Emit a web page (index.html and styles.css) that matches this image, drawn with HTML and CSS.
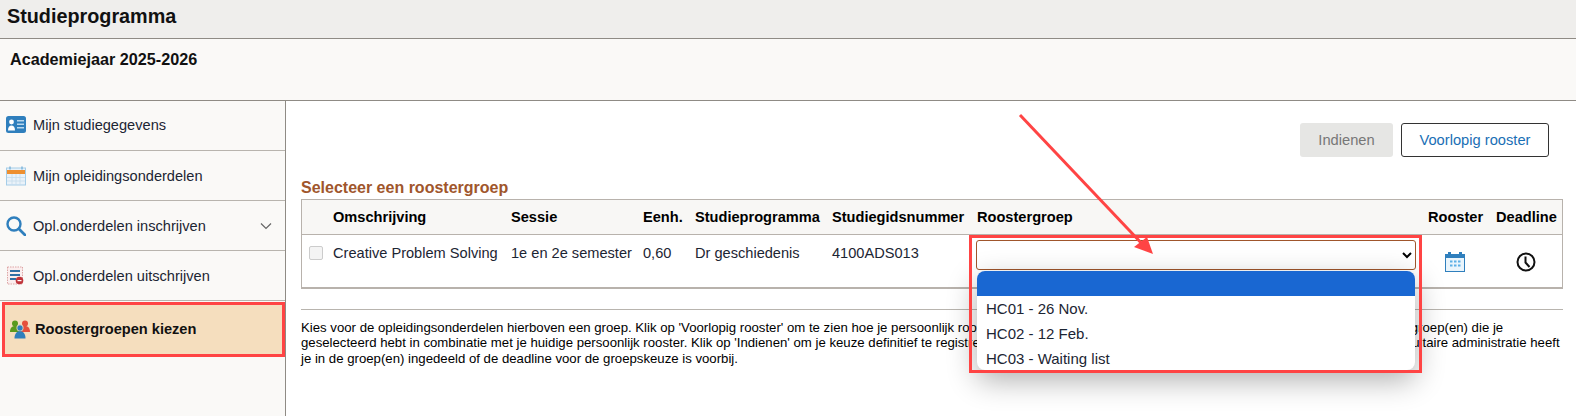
FILE: index.html
```html
<!DOCTYPE html>
<html lang="nl">
<head>
  <meta charset="UTF-8" />
  <meta name="viewport" content="width=device-width, initial-scale=1.0" />
  <title>Studieprogramma</title>
  <link rel="stylesheet" href="styles.css">
</head>
<body>
  <header class="page-title">Studieprogramma</header>
  <div class="year-bar">Academiejaar 2025-2026</div>

  <div class="layout">
    <nav class="sidebar">
      <a class="nav-item">
        <svg class="nav-icon" viewBox="0 0 20 20">
          <rect x="0" y="1" width="20" height="17" rx="2.5" fill="#2f7fbd"/>
          <circle cx="5.5" cy="7" r="2.4" fill="#fff"/>
          <path d="M2 15.5c0-3.5 1.500-5 3.500-5s3.500 1.500 3.500 5z" fill="#fff"/>
          <path d="M11 5h7v1.500h-7zM11 8.500h7v1.500h-7zM11 12h7v1.500h-7z" fill="#b9d8ee"/>
        </svg>
        Mijn studiegegevens
      </a>
      <a class="nav-item">
        <svg class="nav-icon" viewBox="0 0 20 20">
          <rect x="0.500" y="2" width="19" height="17" fill="#e9f2f9" stroke="#a5cde8"/>
          <rect x="1" y="4" width="18" height="4" fill="#ee8f2f"/>
          <path d="M4 .5v3M16 .5v3" stroke="#7fb6dc" stroke-width="1.500"/>
          <path d="M1 11.500h18M1 15h18M6 8v10.500M10 8v10.500M14 8v10.500" stroke="#c5dcec" stroke-width=".8"/>
        </svg>
        Mijn opleidingsonderdelen
      </a>
      <a class="nav-item">
        <svg class="nav-icon" viewBox="0 0 20 20">
          <circle cx="8" cy="8" r="6.500" fill="none" stroke="#2f7fbd" stroke-width="2.400"/>
          <path d="M13 13l6 6" stroke="#2f7fbd" stroke-width="2.800" stroke-linecap="round"/>
        </svg>
        Opl.onderdelen inschrijven
        <svg class="nav-chevron" viewBox="0 0 12 8">
          <path d="M1 1.500l5 5 5-5" fill="none" stroke="#666" stroke-width="1.200"/>
        </svg>
      </a>
      <a class="nav-item">
        <svg class="nav-icon" viewBox="0 0 20 20">
          <rect x="1.500" y="1" width="15" height="17" fill="#fbeeee" stroke="#dda5a5" stroke-dasharray="1.500 1"/>
          <path d="M4 4h10v2h-10zM4 8h10v2h-10zM4 12h6v2h-6z" fill="#2f6fa5"/>
          <circle cx="13.500" cy="14.500" r="3.800" fill="#c0343a"/>
          <path d="M11.500 14h4v1.200h-4z" fill="#fff"/>
        </svg>
        Opl.onderdelen uitschrijven
      </a>
      <a class="nav-item nav-item-active">
        <svg class="nav-icon" viewBox="0 0 20 20">
          <circle cx="5" cy="4.500" r="3" fill="#5a9a1e"/>
          <path d="M0 13c0-4 2-6 5-6s5 2 5 6z" fill="#5a9a1e"/>
          <circle cx="15" cy="4.500" r="3" fill="#e5503c"/>
          <path d="M10 13c0-4 2-6 5-6s5 2 5 6z" fill="#e5503c"/>
          <circle cx="10" cy="9" r="3.200" fill="#2f7fbd" stroke="#f5deBE" stroke-width=".8"/>
          <path d="M4.500 19.500c0-4.500 2-7.200 5.500-7.200s5.500 2.700 5.500 7.200z" fill="#2f7fbd"/>
        </svg>
        Roostergroepen kiezen
      </a>
    </nav>

    <main class="content">
      <div class="actions">
        <button class="btn btn-disabled">Indienen</button>
        <button class="btn btn-outline">Voorlopig rooster</button>
      </div>

      <h2 class="section-title">Selecteer een roostergroep</h2>

      <table class="group-table">
        <thead>
          <tr>
            <th class="col-check"></th>
            <th class="col-desc">Omschrijving</th>
            <th class="col-session">Sessie</th>
            <th class="col-units">Eenh.</th>
            <th class="col-program">Studieprogramma</th>
            <th class="col-number">Studiegidsnummer</th>
            <th class="col-group">Roostergroep</th>
            <th class="col-schedule">Rooster</th>
            <th class="col-deadline">Deadline</th>
          </tr>
        </thead>
        <tbody>
          <tr>
            <td class="check-cell"><span class="fake-check"></span></td>
            <td>Creative Problem Solving</td>
            <td>1e en 2e semester</td>
            <td>0,60</td>
            <td>Dr geschiedenis</td>
            <td>4100ADS013</td>
            <td class="group-cell">
              <select class="group-select"><option></option></select>
              <ul class="group-options">
                <li class="option-selected">&nbsp;</li>
                <li>HC01 - 26 Nov.</li>
                <li>HC02 - 12 Feb.</li>
                <li>HC03 - Waiting list</li>
              </ul>
              <div class="mark-box"></div>
            </td>
            <td class="icon-cell">
              <svg class="table-icon icon-schedule" viewBox="0 0 20 20">
                <rect x="0" y="2" width="20" height="18" fill="#2f7fbd"/>
                <rect x="1" y="6" width="18" height="13" fill="#eaf5fc"/>
                <path d="M3 0h3v4h-3zM14 0h3v4h-3z" fill="#2f7fbd"/>
                <path d="M5 8.500h2.500v2h-2.500zM9 8.500h2.500v2h-2.500zM13 8.500h2.500v2h-2.500zM5 12.500h2.500v2h-2.500zM9 12.500h2.500v2h-2.500zM13 12.500h2.500v2h-2.500z" fill="#5cb0e6"/>
              </svg>
            </td>
            <td class="icon-cell">
              <svg class="table-icon icon-deadline" viewBox="0 0 20 20">
                <circle cx="10" cy="10" r="8.500" fill="none" stroke="#111" stroke-width="2"/>
                <path d="M9.500 4.500v6l4 4.500" fill="none" stroke="#111" stroke-width="2"/>
              </svg>
            </td>
          </tr>
        </tbody>
      </table>

      <hr class="divider">

      <p class="help-text">
        Kies voor de opleidingsonderdelen hierboven een groep. Klik op 'Voorlopig rooster' om te zien hoe je persoonlijk rooster eruit zou zien als je de keuze bevestigt met wijzigingen van de roostergroep(en) die je<br>
        geselecteerd hebt in combinatie met je huidige persoonlijk rooster. Klik op 'Indienen' om je keuze definitief te registreren. Je keuze is pas definitief en wordt verwerkt en bevestigd zodra de facultaire administratie heeft<br>
        je in de groep(en) ingedeeld of de deadline voor de groepskeuze is voorbij.
      </p>
    </main>
  </div>

  <svg class="mark-arrow" viewBox="0 0 1576 416">
    <path d="M1020 115L1146 248" stroke="#ff4444" stroke-width="3"/>
    <path d="M1153 254L1134 247L1147 237z" fill="#ff4444"/>
  </svg>
</body>
</html>
```

FILE: styles.css
```css
body {
  margin: 0;
  height: 416px;
  overflow: hidden;
  position: relative;
  background-color: #fff;
  font-family: "Liberation Sans", Arial, sans-serif;
  font-size: 14.6px;
  color: #111;
}

.page-title {
  box-sizing: border-box;
  padding: 5px 7px 0;
  background-color: #efeeec;
  border-bottom: 1px solid #8f8b85;
  height: 39px;
  font-size: 19.8px;
  font-weight: bold;
  line-height: 22px;
}
.year-bar {
  padding: 11px 10px 0;
  box-sizing: border-box;
  height: 62px;
  background-color: #faf9f7;
  border-bottom: 1px solid #8f8b85;
  font-size: 16.2px;
  font-weight: bold;
  line-height: 18px;
}

.layout {
  display: flex;
  height: 315px;
}

/* Sidebar */
.sidebar {
  width: 286px;
  box-sizing: border-box;
  flex: none;
  background-color: #faf9f7;
  border-right: 1px solid #8f8b85;
}
.nav-item {
  display: flex;
  align-items: center;
  height: 50px;
  box-sizing: border-box;
  padding-left: 6px;
  border-bottom: 1px solid #b8b4ae;
  color: #1c2533;
}
.nav-item:first-child {
  padding-bottom: 2px;
}
.nav-icon {
  width: 20px;
  height: 20px;
  margin-right: 7px;
  flex: none;
}
.nav-chevron {
  width: 12px;
  height: 8px;
  margin-left: auto;
  margin-right: 13px;
}
.nav-item-active {
  height: 55px;
  margin-top: 1px;
  margin-left: 2px;
  padding-left: 5px;
  padding-bottom: 2px;
  border: 3px solid #ff4444;
  background-color: #f5debe;
  font-weight: bold;
  color: #111;
}
.nav-item-active .nav-icon {
  margin-right: 5px;
}

/* Main */
.content {
  flex: 1;
  padding: 22px 13px 0 15px;
  min-width: 0;
}
.actions {
  display: flex;
  justify-content: flex-end;
  gap: 8px;
  padding-right: 14px;
}
.btn {
  height: 34px;
  border-radius: 3px;
  font-family: inherit;
  font-size: 14.7px;
  padding: 0;
}
.btn-disabled {
  width: 93px;
  border: none;
  background-color: #e6e6e4;
  color: #777;
}
.btn-outline {
  width: 148px;
  border: 1px solid #333;
  background-color: #fff;
  color: #1a6fb5;
}
.section-title {
  margin: 22px 0 2px;
  font-size: 16px;
  line-height: 18px;
  font-weight: bold;
  color: #a0562c;
}

/* Table */
.group-table {
  width: 1262px;
  table-layout: fixed;
  border-collapse: separate;
  border-spacing: 0;
  border: 1px solid #b8b2ac;
  border-bottom-width: 2px;
}
.group-table th {
  height: 34px;
  padding: 0;
  text-align: left;
  background-color: #f8f7f5;
  border-bottom: 1px solid #b8b2ac;
  font-weight: bold;
  color: #000;
}
.group-table td {
  height: 52px;
  padding: 10px 0 0;
  box-sizing: border-box;
  vertical-align: top;
  line-height: 17px;
  color: #1c2533;
}
.col-check { width: 31px; }
.col-desc { width: 178px; }
.col-session { width: 132px; }
.col-units { width: 52px; }
.col-program { width: 137px; }
.col-number { width: 145px; }
.col-group { width: 451px; }
.col-schedule { width: 68px; }
.group-table .check-cell {
  padding-top: 11px;
}
.fake-check {
  display: block;
  width: 12px;
  height: 12px;
  margin-left: 7px;
  border: 1px solid #ccc;
  border-radius: 2px;
  background-color: #f4f4f4;
}
.group-table .group-cell {
  position: relative;
  padding-top: 5px;
}
.group-select {
  display: block;
  width: 440px;
  height: 30px;
  margin-left: -1px;
  border: 1px solid #a0562c;
  border-radius: 3px;
  background-color: #fff;
  font-family: inherit;
  font-size: 14px;
}
.group-options {
  position: absolute;
  top: 36px;
  left: 0;
  width: 438px;
  height: 99px;
  margin: 0;
  padding: 0;
  list-style: none;
  overflow: hidden;
  background-color: #fff;
  border-radius: 8px;
  box-shadow: 0 10px 30px rgba(0, 0, 0, 0.32);
  z-index: 2;
}
.group-options li {
  height: 25px;
  padding-left: 9px;
  font-size: 15px;
  line-height: 25px;
  color: #1c2533;
}
.option-selected {
  background-color: #1967d2;
}
.mark-box {
  position: absolute;
  top: 0;
  left: -8px;
  width: 447px;
  height: 132px;
  border: 3px solid #ff4444;
  z-index: 3;
}
.group-table .icon-cell {
  padding-top: 17px;
}
.table-icon {
  display: block;
  width: 20px;
  height: 20px;
}
.icon-schedule { margin-left: 17px; }
.icon-deadline { margin-left: 20px; }

/* Footer text */
.divider {
  margin: 20px 0 10px;
  width: 1262px;
  border: none;
  border-top: 1px solid #b8b4ae;
}
.help-text {
  margin: 0;
  font-size: 13.2px;
  line-height: 15.3px;
  white-space: nowrap;
  color: #000;
}

.mark-arrow {
  position: absolute;
  top: 0;
  left: 0;
  width: 1576px;
  height: 416px;
  z-index: 5;
  pointer-events: none;
}
```
